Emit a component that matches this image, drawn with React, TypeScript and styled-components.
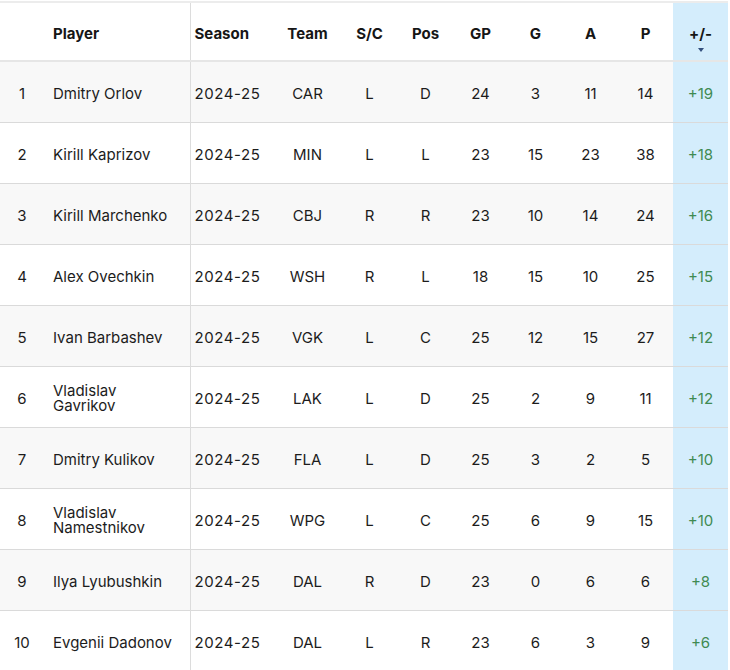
import React from 'react';
import styled, { createGlobalStyle } from 'styled-components';

const GlobalStyle = createGlobalStyle`
  body {
    margin: 0;
    background: #ffffff;
    font-family: Inter, "Noto Sans", sans-serif;
    color: #1c1c1c;
  }
`;

interface Row {
  name: string;
  team: string;
  sc: string;
  pos: string;
  gp: number;
  g: number;
  a: number;
  p: number;
  pm: string;
}

const ROWS: Row[] = [
  { name: 'Dmitry Orlov', team: 'CAR', sc: 'L', pos: 'D', gp: 24, g: 3, a: 11, p: 14, pm: '+19' },
  { name: 'Kirill Kaprizov', team: 'MIN', sc: 'L', pos: 'L', gp: 23, g: 15, a: 23, p: 38, pm: '+18' },
  { name: 'Kirill Marchenko', team: 'CBJ', sc: 'R', pos: 'R', gp: 23, g: 10, a: 14, p: 24, pm: '+16' },
  { name: 'Alex Ovechkin', team: 'WSH', sc: 'R', pos: 'L', gp: 18, g: 15, a: 10, p: 25, pm: '+15' },
  { name: 'Ivan Barbashev', team: 'VGK', sc: 'L', pos: 'C', gp: 25, g: 12, a: 15, p: 27, pm: '+12' },
  { name: 'Vladislav Gavrikov', team: 'LAK', sc: 'L', pos: 'D', gp: 25, g: 2, a: 9, p: 11, pm: '+12' },
  { name: 'Dmitry Kulikov', team: 'FLA', sc: 'L', pos: 'D', gp: 25, g: 3, a: 2, p: 5, pm: '+10' },
  { name: 'Vladislav Namestnikov', team: 'WPG', sc: 'L', pos: 'C', gp: 25, g: 6, a: 9, p: 15, pm: '+10' },
  { name: 'Ilya Lyubushkin', team: 'DAL', sc: 'R', pos: 'D', gp: 23, g: 0, a: 6, p: 6, pm: '+8' },
  { name: 'Evgenii Dadonov', team: 'DAL', sc: 'L', pos: 'R', gp: 23, g: 6, a: 3, p: 9, pm: '+6' },
];

const Wrap = styled.div`
  padding-top: 1px;
`;

const Table = styled.table`
  width: 728px;
  border-collapse: collapse;
  table-layout: fixed;
  border-top: 2px solid #ececec;
  font-size: 15px;
`;

const Th = styled.th<{ $align?: 'left' | 'center'; $sorted?: boolean; $divider?: boolean }>`
  height: 53px;
  padding: 4px ${(p) => (p.$align === 'left' ? '4px' : '0')} 0;
  text-align: ${(p) => p.$align ?? 'center'};
  font-size: 15px;
  font-weight: 700;
  color: #161616;
  border-bottom: 2px solid #e6e6e6;
  border-right: ${(p) => (p.$divider ? '1px solid #dcdcdc' : 'none')};
  background: ${(p) => (p.$sorted ? '#d4edfc' : 'transparent')};
  position: relative;
`;

const SortArrow = styled.span`
  position: absolute;
  left: 50%;
  top: 45px;
  margin-left: -3px;
  width: 0;
  height: 0;
  border-left: 3px solid transparent;
  border-right: 3px solid transparent;
  border-top: 4px solid #34507e;
`;

const Tr = styled.tr<{ $odd: boolean }>`
  background: ${(p) => (p.$odd ? '#f8f8f8' : '#ffffff')};
  border-bottom: 1px solid #dadada;
`;

const Td = styled.td<{ $align?: 'left' | 'center'; $sorted?: boolean; $divider?: boolean }>`
  height: 58px;
  padding: 2px ${(p) => (p.$align === 'left' ? '4px' : '0')} 0;
  text-align: ${(p) => p.$align ?? 'center'};
  line-height: 15px;
  color: ${(p) => (p.$sorted ? '#3f8a52' : '#1c1c1c')};
  background: ${(p) => (p.$sorted ? '#d4edfc' : 'transparent')};
  border-right: ${(p) => (p.$divider ? '1px solid #dcdcdc' : 'none')};
`;

const Season = styled.span`
  letter-spacing: 0.6px;
`;

const NameCell = styled(Td)`
  padding-left: 9px;
  padding-right: 10px;
`;

const NameHead = styled(Th)`
  padding-left: 9px;
`;

const WIDTHS = [44, 146, 84, 67, 57, 55, 55, 55, 55, 55, 55];

export default function App() {
  return (
    <>
      <GlobalStyle />
      <Wrap>
        <Table>
          <colgroup>
            {WIDTHS.map((w, i) => (
              <col key={i} style={{ width: w }} />
            ))}
          </colgroup>
          <thead>
            <tr>
              <Th />
              <NameHead $align="left" $divider>Player</NameHead>
              <Th $align="left">Season</Th>
              <Th>Team</Th>
              <Th>S/C</Th>
              <Th>Pos</Th>
              <Th>GP</Th>
              <Th>G</Th>
              <Th>A</Th>
              <Th>P</Th>
              <Th $sorted>
                +/-
                <SortArrow />
              </Th>
            </tr>
          </thead>
          <tbody>
            {ROWS.map((r, i) => (
              <Tr key={r.name} $odd={i % 2 === 0}>
                <Td>{i + 1}</Td>
                <NameCell $align="left" $divider>{r.name}</NameCell>
                <Td $align="left">
                  <Season>2024-25</Season>
                </Td>
                <Td>{r.team}</Td>
                <Td>{r.sc}</Td>
                <Td>{r.pos}</Td>
                <Td>{r.gp}</Td>
                <Td>{r.g}</Td>
                <Td>{r.a}</Td>
                <Td>{r.p}</Td>
                <Td $sorted>{r.pm}</Td>
              </Tr>
            ))}
          </tbody>
        </Table>
      </Wrap>
    </>
  );
}
